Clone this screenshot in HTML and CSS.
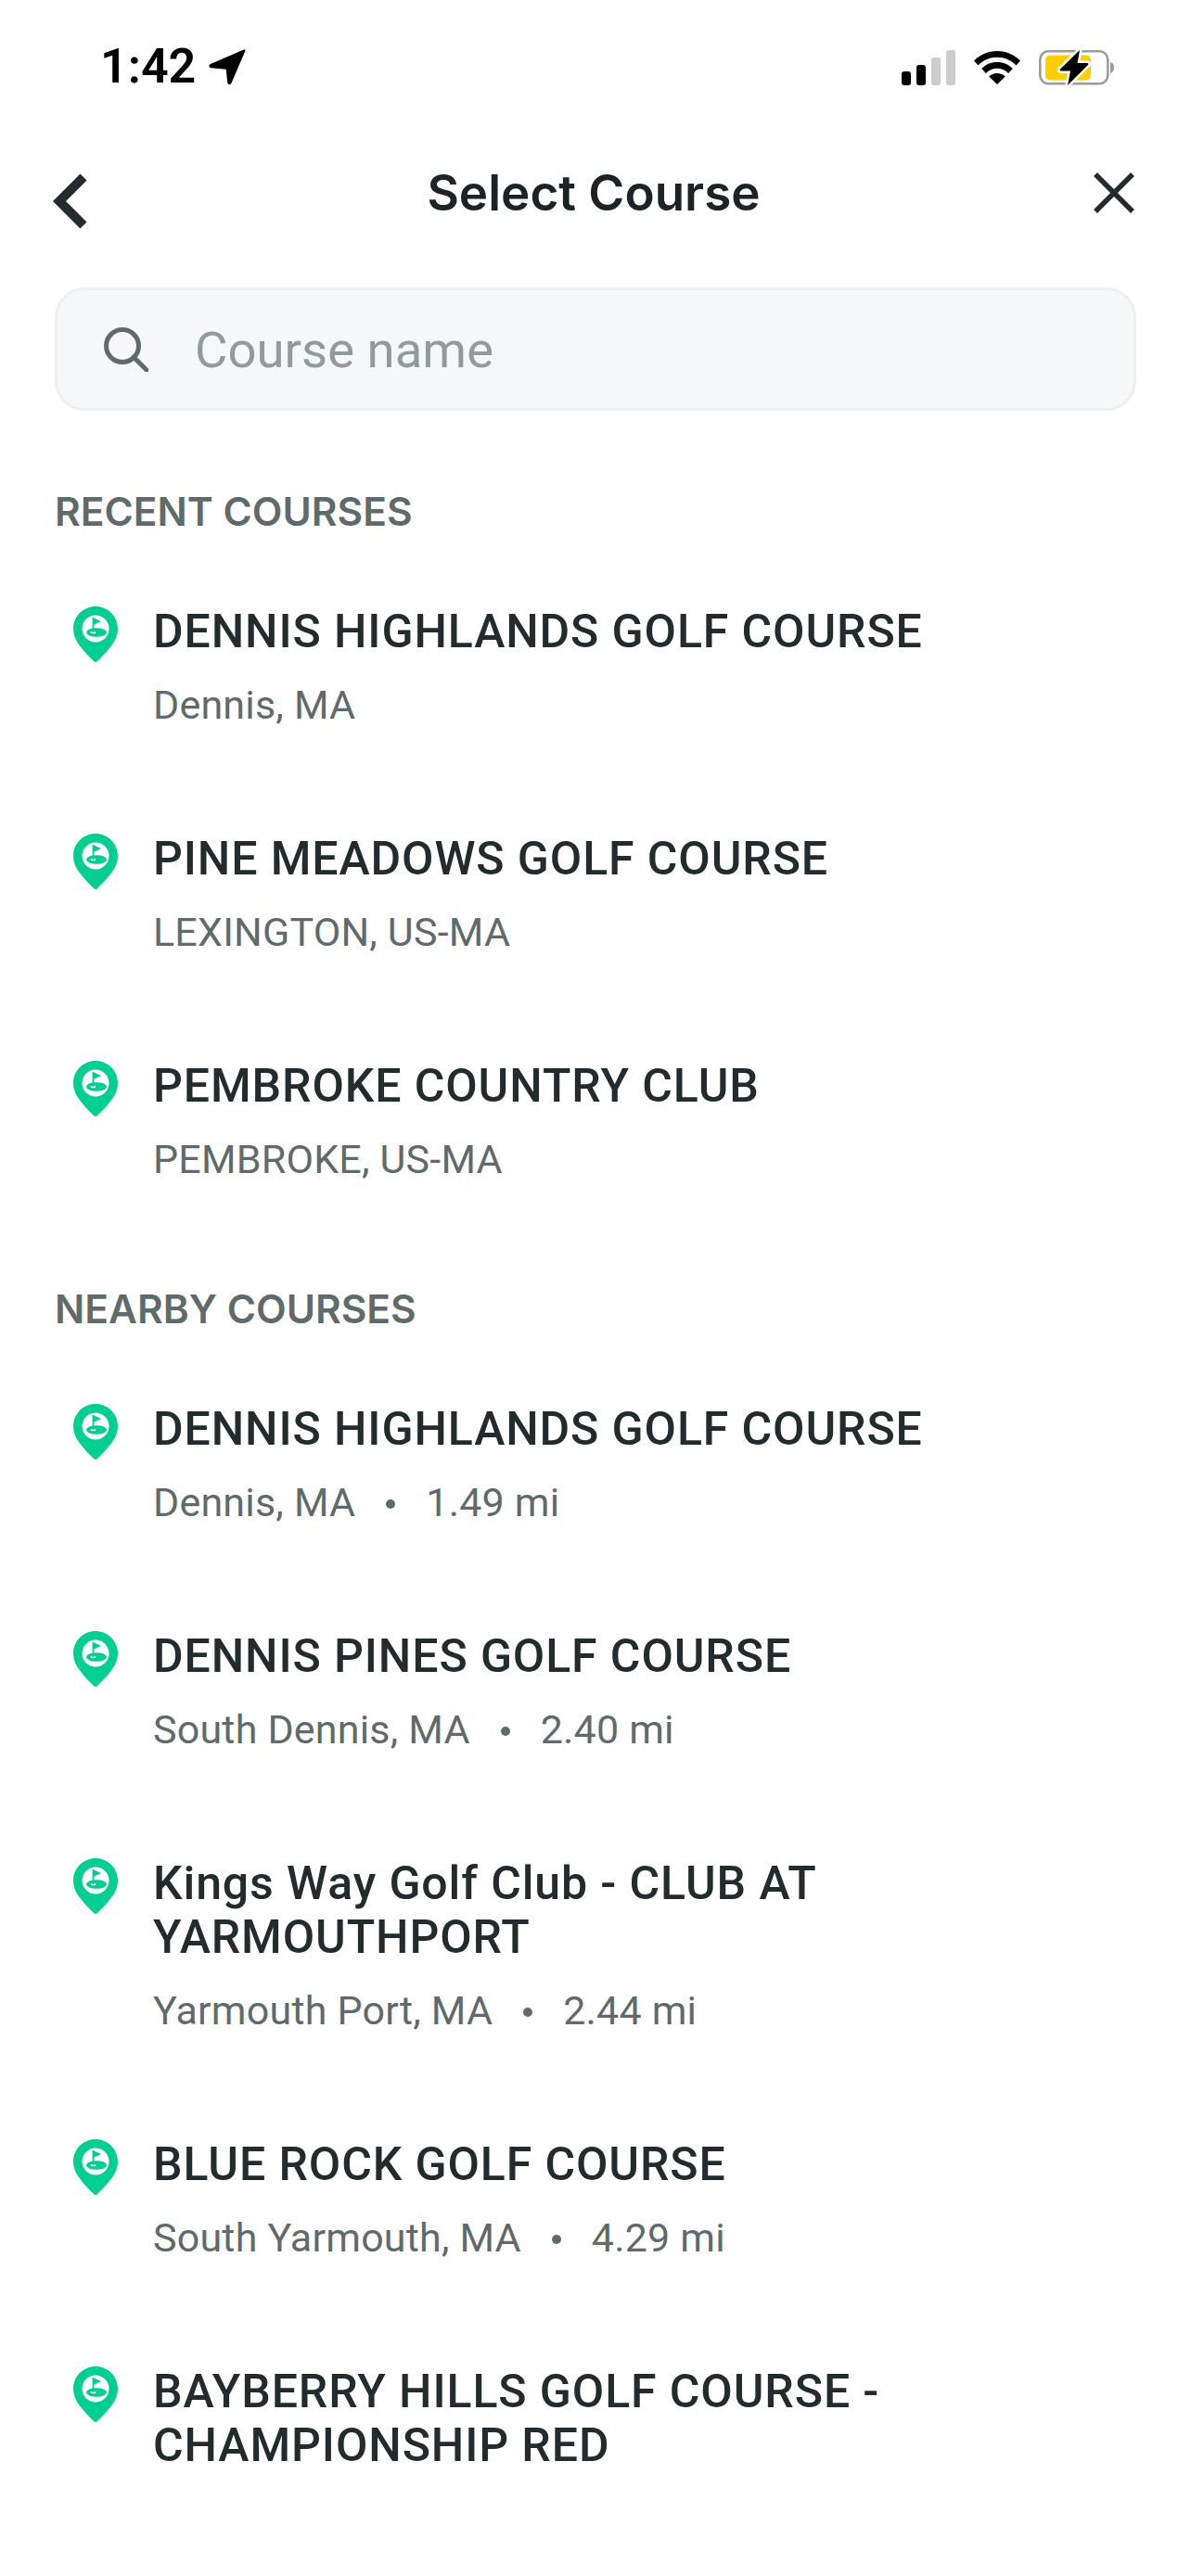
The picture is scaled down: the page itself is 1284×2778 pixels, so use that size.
FILE: index.html
```html
<!DOCTYPE html>
<html lang="en">
  <head>
    <meta charset="utf-8" />
    <title>Select Course</title>
    <link rel="stylesheet" href="styles.css">
  </head>
  <body>
    <svg class="defs" width="0" height="0">
      <symbol id="pin" viewBox="0 0 48 60">
        <path fill="#00cf91" d="M24 0C10.700 0 0 10.700 0 24c0 6.500 2.400 12.400 6.300 17.600C11 48 17 54.500 22.300 59.200c1 .9 2.400 .9 3.400 0C31 54.500 37 48 41.700 41.600 45.600 36.400 48 30.500 48 24 48 10.700 37.300 0 24 0z"/>
        <circle cx="24" cy="24" r="14.500" fill="#fff"/>
        <ellipse cx="25" cy="28" rx="11" ry="4.800" fill="#00cf91"/>
        <ellipse cx="21.500" cy="28" rx="3" ry="1.200" fill="#fff"/>
        <path fill="none" stroke="#00cf91" stroke-width="1.800" d="M21.500 28V12"/>
        <path fill="#00cf91" d="M21.500 12l8.500 4-8.500 4z"/>
      </symbol>
    </svg>

    <div class="status">
      <div class="status-left">
        <span class="time">1:42</span>
        <svg class="loc" viewBox="0 0 40 40"><path d="M38 1.500c1-.3 1.800 .5 1.400 1.600L24.500 37.500c-1.200 2.400-4 1.800-4.300-.6l-1.500-14.200-16.300-1.400c-2.300-.4-2.700-3.300-.5-4.300z"/></svg>
      </div>
      <div class="status-right">
        <svg class="signal" viewBox="0 0 58 38">
          <rect x="0" y="23" width="10" height="15" rx="3"/>
          <rect x="16" y="16" width="10" height="22" rx="3"/>
          <rect x="32" y="8" width="10" height="30" rx="3" fill="#ccc"/>
          <rect x="48" y="0" width="10" height="38" rx="3" fill="#ccc"/>
        </svg>
        <svg class="wifi" viewBox="0 0 50 36">
          <path d="M25 0C15.500 0 7 3.700 0 10.500l4.500 5C10 10 17 6.800 25 6.800s15 3.200 20.500 8.700l4.500-5C43 3.700 34.500 0 25 0z"/>
          <path d="M25 12c-6.500 0-12.300 2.600-16.800 7l4.700 5c3.200-3.200 7.400-5.200 12.100-5.200s8.900 2 12.100 5.200l4.700-5C37.300 14.600 31.500 12 25 12z"/>
          <path d="M25 24c-3.500 0-6.600 1.300-8.800 3.500L25 36l8.800-8.500C31.600 25.300 28.500 24 25 24z"/>
        </svg>
        <svg class="battery" viewBox="0 0 82 40">
          <rect x="1.300" y="2.300" width="73" height="35" rx="9" fill="none" stroke="#9b9b9b" stroke-width="2.600"/>
          <path fill="#9b9b9b" d="M77 14c2.500 .5 4 3 4 6s-1.500 5.500-4 6z"/>
          <rect x="7" y="6.500" width="49" height="27" rx="5" fill="#ffce00"/>
          <path fill="#000" stroke="#fff" stroke-width="5" paint-order="stroke" stroke-linejoin="round" d="M44 1 23 21.500c-.8 .8-.4 2 .8 2H34L31 39 53 17c.8-.8 .4-2-.8-2H41.500z"/>
        </svg>
      </div>
    </div>

    <header class="nav">
      <svg class="back" viewBox="0 0 38 62"><path d="M33 5 7 31l26 26" fill="none" stroke="#222c2e" stroke-width="10"/></svg>
      <h1>Select Course</h1>
      <svg class="close" viewBox="0 0 44 44"><path d="M2 2l40 40M42 2 2 42" fill="none" stroke="#222c2e" stroke-width="5.500"/></svg>
    </header>

    <div class="search">
      <svg class="search-icon" viewBox="0 0 48 48"><circle cx="20" cy="20" r="17.500" fill="none" stroke="#5f6b6b" stroke-width="5"/><path d="M32 32l14 14" fill="none" stroke="#5f6b6b" stroke-width="5" stroke-linecap="round"/></svg>
      <span class="placeholder">Course name</span>
    </div>

    <section class="recent">
      <h2>RECENT COURSES</h2>
      <div class="row">
        <svg class="pin"><use href="#pin"/></svg>
        <div class="info">
          <div class="name">DENNIS HIGHLANDS GOLF COURSE</div>
          <div class="place">Dennis, MA</div>
        </div>
      </div>
      <div class="row">
        <svg class="pin"><use href="#pin"/></svg>
        <div class="info">
          <div class="name">PINE MEADOWS GOLF COURSE</div>
          <div class="place">LEXINGTON, US-MA</div>
        </div>
      </div>
      <div class="row">
        <svg class="pin"><use href="#pin"/></svg>
        <div class="info">
          <div class="name">PEMBROKE COUNTRY CLUB</div>
          <div class="place">PEMBROKE, US-MA</div>
        </div>
      </div>
    </section>

    <section class="nearby">
      <h2>NEARBY COURSES</h2>
      <div class="row">
        <svg class="pin"><use href="#pin"/></svg>
        <div class="info">
          <div class="name">DENNIS HIGHLANDS GOLF COURSE</div>
          <div class="place">Dennis, MA<i class="dot"></i>1.49 mi</div>
        </div>
      </div>
      <div class="row">
        <svg class="pin"><use href="#pin"/></svg>
        <div class="info">
          <div class="name">DENNIS PINES GOLF COURSE</div>
          <div class="place">South Dennis, MA<i class="dot"></i>2.40 mi</div>
        </div>
      </div>
      <div class="row">
        <svg class="pin"><use href="#pin"/></svg>
        <div class="info">
          <div class="name">Kings Way Golf Club - CLUB AT<br>YARMOUTHPORT</div>
          <div class="place">Yarmouth Port, MA<i class="dot"></i>2.44 mi</div>
        </div>
      </div>
      <div class="row">
        <svg class="pin"><use href="#pin"/></svg>
        <div class="info">
          <div class="name">BLUE ROCK GOLF COURSE</div>
          <div class="place">South Yarmouth, MA<i class="dot"></i>4.29 mi</div>
        </div>
      </div>
      <div class="row">
        <svg class="pin"><use href="#pin"/></svg>
        <div class="info">
          <div class="name">BAYBERRY HILLS GOLF COURSE -<br>CHAMPIONSHIP RED</div>
        </div>
      </div>
    </section>
  </body>
</html>
```

FILE: styles.css
```css
* {
  margin: 0;
  padding: 0;
  box-sizing: border-box;
}

html,
body {
  background: #fff;
  overflow: hidden;
}

body {
  width: 1284px;
  height: 2778px;
  font-family: "Roboto", "Liberation Sans", sans-serif;
  color: #222c2e;
}

.defs {
  display: block;
  height: 0;
}

/* status bar */
.status {
  height: 144px;
  display: flex;
  justify-content: space-between;
  align-items: flex-start;
  padding: 50px 82px 0 108px;
}

.status-left {
  display: flex;
  align-items: center;
  gap: 14px;
}

.time {
  font-size: 52px;
  line-height: 44px;
  font-weight: 600;
  color: #000;
}

.loc {
  width: 40px;
  height: 40px;
}

.status-right {
  display: flex;
  align-items: center;
  gap: 20px;
  padding-top: 3px;
}

.signal {
  width: 58px;
  height: 38px;
}

.wifi {
  width: 50px;
  height: 36px;
}

.battery {
  width: 82px;
  height: 40px;
}

/* title bar */
.nav {
  height: 128px;
  display: grid;
  grid-template-columns: 1fr auto 1fr;
  align-items: center;
  padding: 0 61px 0 57px;
}

.back {
  width: 38px;
  height: 62px;
  margin-top: 17px;
}

.nav h1 {
  font-family: "Inter", "Roboto", sans-serif;
  font-size: 53px;
  font-weight: 600;
  line-height: 64px;
  color: #1c2326;
}

.close {
  width: 44px;
  height: 44px;
  justify-self: end;
}

/* search */
.search {
  height: 133px;
  margin: 38px 59px 0;
  padding-left: 50px;
  display: flex;
  align-items: center;
  gap: 50px;
  background: #f6f7f9;
  border: 3px solid #eef0f0;
  border-radius: 32px;
}

.search-icon {
  width: 48px;
  height: 48px;
}

.placeholder {
  font-size: 54.500px;
  color: #919b9a;
}

/* lists */
section {
  padding: 0 59px;
}

.recent {
  padding-top: 84px;
}

.nearby {
  padding-top: 75px;
}

h2 {
  font-family: "Inter", "Roboto", sans-serif;
  font-size: 42.500px;
  line-height: 50px;
  font-weight: 600;
  color: #5f6b6b;
}

.row {
  display: flex;
  gap: 38px;
  padding: 75px 0 37px 20px;
}

.pin {
  width: 48px;
  height: 60px;
  flex: none;
  margin-top: 2px;
}

.name {
  font-size: 50px;
  line-height: 58px;
  font-weight: 500;
  letter-spacing: .9px;
}

.place {
  margin-top: 25px;
  font-size: 43px;
  line-height: 50px;
  letter-spacing: .2px;
  color: #5f6b6b;
}

.dot {
  display: inline-block;
  width: 10px;
  height: 10px;
  margin: 0 33px;
  border-radius: 50%;
  background: #5f6b6b;
  vertical-align: 8px;
}
```
